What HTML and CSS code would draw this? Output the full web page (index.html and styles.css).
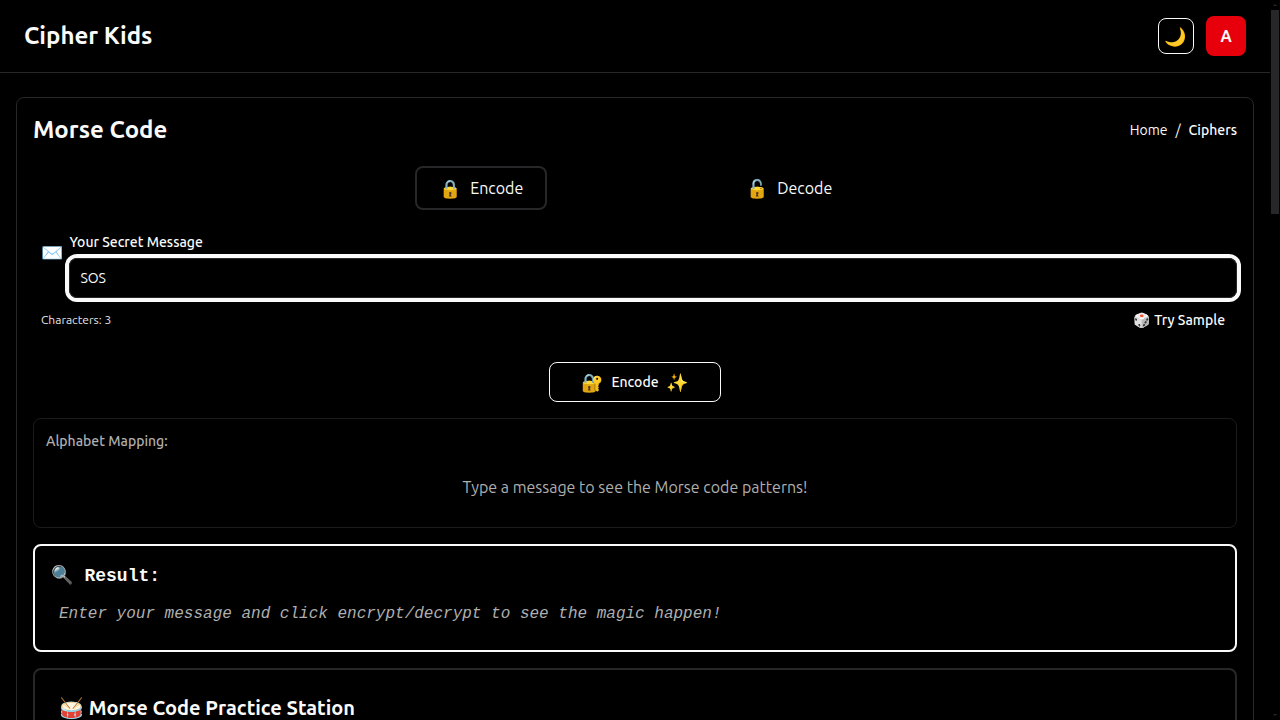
FILE: index.html
```html
<!DOCTYPE html>
<html lang="en">
<head>
<meta charset="utf-8">
<meta name="viewport" content="width=device-width, initial-scale=1">
<title>Cipher Kids</title>
<link rel="stylesheet" href="styles.css">
</head>
<body>
<div class="page">
  <header class="topbar">
    <div class="brand">Cipher Kids</div>
    <div class="topbar-actions">
      <button class="theme-button" type="button" aria-label="Toggle theme"><span class="emoji">🌙</span></button>
      <button class="avatar" type="button" aria-label="Account">A</button>
    </div>
  </header>
  <main class="main">
    <section class="card">
      <div class="card-head">
        <h1 class="title">Morse Code</h1>
        <nav class="crumbs"><a href="#">Home</a><span>/</span><a class="current" href="#">Ciphers</a></nav>
      </div>
      <div class="tabs">
        <button class="tab tab-active" type="button"><span class="emoji">🔒</span>Encode</button>
        <button class="tab" type="button"><span class="emoji">🔓</span>Decode</button>
      </div>
      <div class="message">
        <span class="emoji envelope">✉️</span>
        <div class="field">
          <label class="label" for="message">Your Secret Message</label>
          <input class="input" id="message" type="text" value="SOS">
        </div>
      </div>
      <div class="meta">
        <span class="count">Characters: 3</span>
        <button class="sample" type="button">🎲 Try Sample</button>
      </div>
      <button class="encode" type="button"><span class="emoji">🔐</span>Encode<span class="emoji">✨</span></button>
      <section class="mapping">
        <h2 class="mapping-title">Alphabet Mapping:</h2>
        <p class="mapping-empty">Type a message to see the Morse code patterns!</p>
      </section>
      <section class="result">
        <h2 class="result-title"><span class="emoji">🔍</span>Result:</h2>
        <p class="result-empty">Enter your message and click encrypt/decrypt to see the magic happen!</p>
      </section>
      <section class="practice">
        <h2 class="practice-title">🥁 Morse Code Practice Station</h2>
      </section>
    </section>
  </main>
</div>
<div class="scrollbar" aria-hidden="true">
  <span class="arrow arrow-up"></span>
  <span class="thumb"></span>
  <span class="arrow arrow-down"></span>
</div>
</body>
</html>
```
FILE: styles.css
```css
* { box-sizing: border-box; }
body {
  margin: 0;
  height: 100vh;
  display: flex;
  overflow: hidden;
  background: #000;
  color: #fafafa;
  font-family: Ubuntu, "Noto Sans", "Noto Color Emoji", sans-serif;
  font-size: 16px;
  font-weight: 400;
  line-height: 24px;
}
h1, h2, p { margin: 0; }
button, input { font: inherit; color: inherit; background: transparent; border: 0; }
a { color: inherit; text-decoration: none; }
.page { flex: 1; min-width: 0; overflow-y: auto; scrollbar-width: none; }
.topbar {
  display: flex;
  justify-content: space-between;
  align-items: center;
  padding: 16px 24px;
  border-bottom: 1px solid #27272a;
}
.brand, .title { font-size: 24px; line-height: 32px; font-weight: 700; }
.topbar-actions { display: flex; align-items: center; gap: 12px; }
.theme-button { width: 36px; height: 36px; padding: 0; border: 1px solid #fafafa; border-radius: 8px; }
.avatar { width: 40px; height: 40px; padding: 0; border-radius: 8px; background: #e7000b; font-weight: 700; }
.emoji { font-size: 18px; line-height: 24px; }
.main { padding: 24px 16px; }
.card { padding: 16px; border: 1px solid #27272a; border-radius: 8px; }
.card-head { display: flex; justify-content: space-between; align-items: center; }
.crumbs { display: flex; gap: 8px; font-size: 14px; line-height: 20px; }
.current { font-weight: 500; }
.tabs { display: grid; grid-template-columns: 1fr 1fr; justify-items: center; max-width: 616px; margin: 20px auto 22px; }
.tab { display: flex; align-items: center; gap: 8px; padding: 8px 22px 8px 23px; border: 2px solid transparent; border-radius: 8px; }
.tab-active { border-color: #27272a; }
.message { display: flex; gap: 6px; padding-left: 8px; }
.envelope { margin-top: 8px; }
.field { flex: 1; display: flex; flex-direction: column; gap: 6px; }
.label { font-size: 14px; line-height: 20px; font-weight: 500; }
.input {
  width: 100%;
  height: 40px;
  padding: 0 10px;
  border: 1px solid #27272a;
  border-radius: 8px;
  outline: 0;
  box-shadow: 0 0 0 4px #fafafa;
  font-size: 14px;
}
.meta { display: flex; justify-content: space-between; align-items: center; padding: 4px 0 24px 8px; }
.count { font-size: 12px; line-height: 16px; color: #e4e4e7; }
.sample { height: 36px; padding: 0 12px; font-size: 14px; font-weight: 500; }
.encode {
  display: flex;
  justify-content: center;
  align-items: center;
  gap: 8px;
  height: 40px;
  margin: 0 auto 16px;
  padding: 0 31px;
  border: 1px solid #fafafa;
  border-radius: 8px;
  font-size: 14px;
  font-weight: 500;
}
.mapping { padding: 12px 12px 28px; border: 1px solid #1b1b1d; border-radius: 8px; color: #afafaf; }
.mapping-title { font-size: 14px; line-height: 20px; font-weight: 500; }
.mapping-empty { margin-top: 24px; text-align: center; }
.result {
  margin: 16px 0;
  padding: 16px;
  border: 2px solid #fafafa;
  border-radius: 8px;
  font-family: "Liberation Mono", "Noto Color Emoji", monospace;
}
.result-title { display: flex; gap: 11px; font-size: 18px; line-height: 28px; font-weight: 700; }
.result-title .emoji { line-height: 28px; }
.result-empty { margin-top: 4px; padding: 8px; font-style: italic; font-weight: 400; color: #afafaf; }
.practice { min-height: 200px; padding: 24px; border: 2px solid #27272a; border-radius: 8px; }
.practice-title { font-size: 20px; line-height: 28px; font-weight: 700; }
.scrollbar { width: 10px; display: flex; flex-direction: column; align-items: center; }
.thumb { width: 8px; height: 204px; background: #27272a; }
.arrow { height: 10px; display: flex; align-items: center; }
.arrow::before { content: ""; border: 2px solid transparent; border-top-width: 0; border-bottom: 2px solid #27272a; }
.arrow-down { margin-top: auto; transform: rotate(180deg); }
```
